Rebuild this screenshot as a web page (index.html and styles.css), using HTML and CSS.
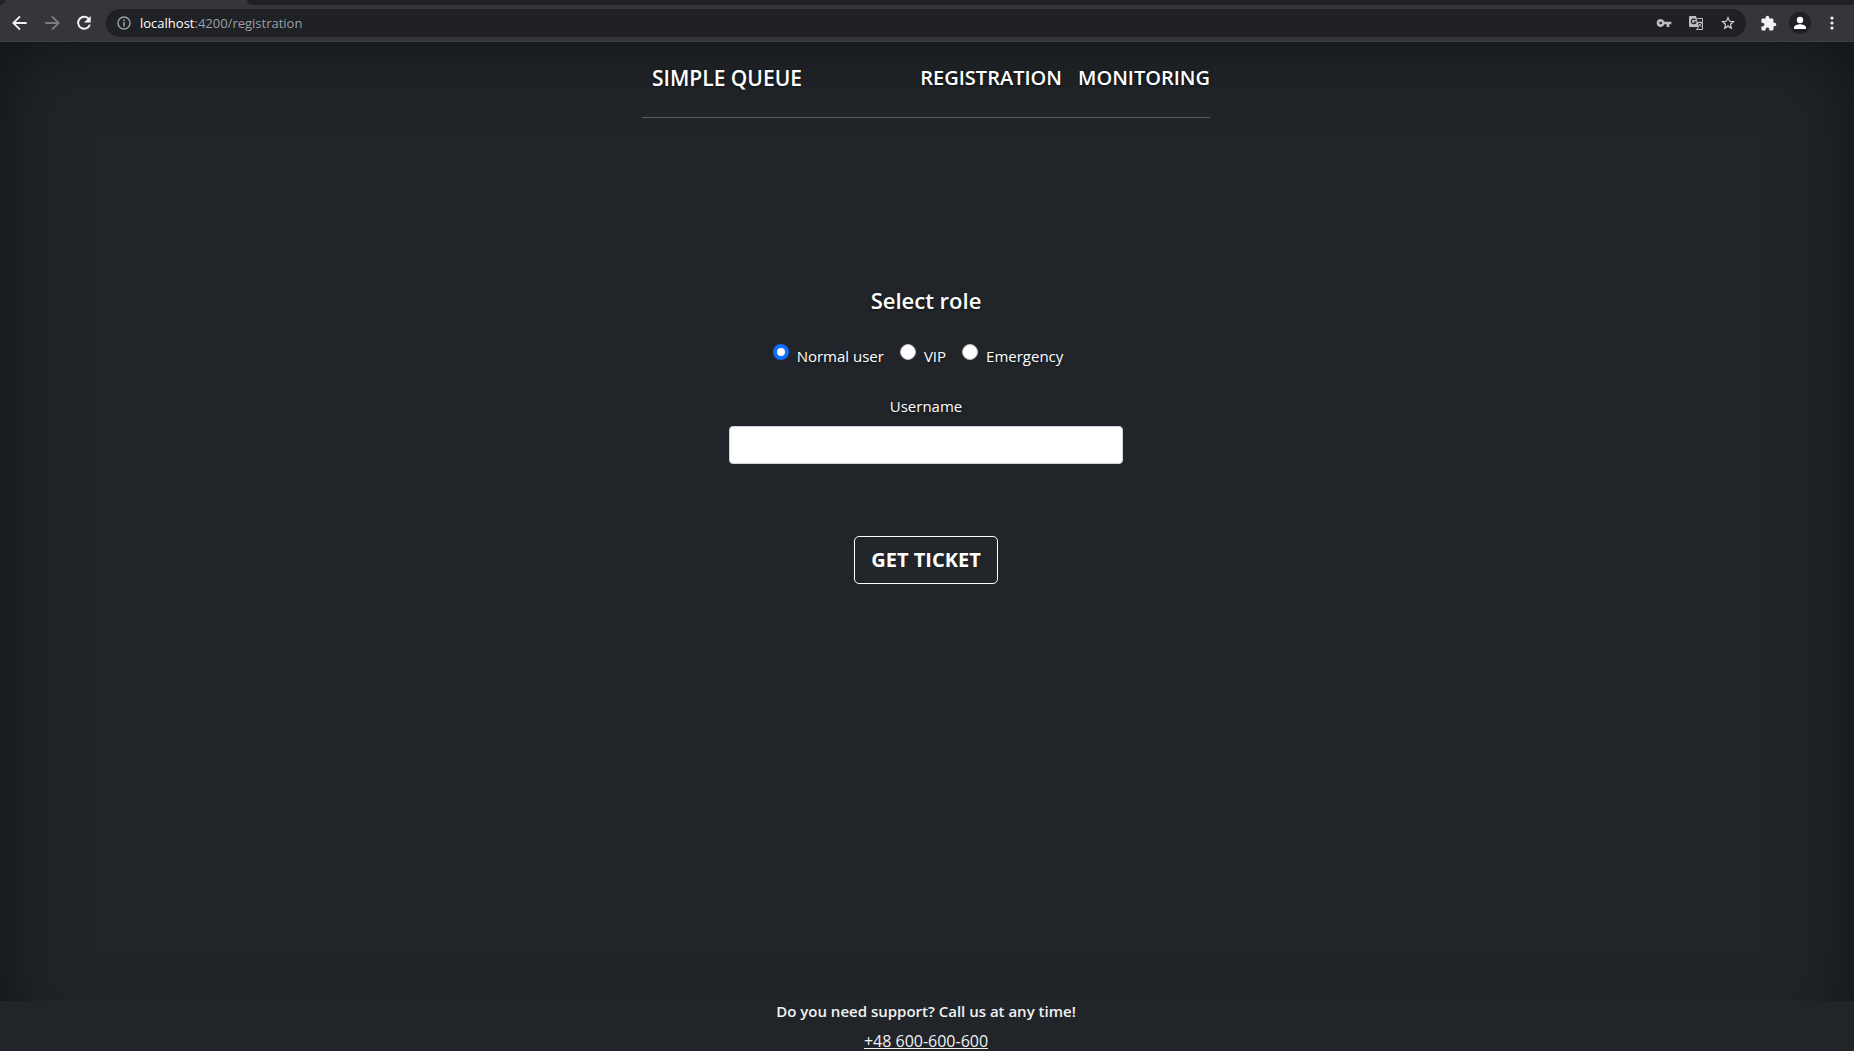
FILE: index.html
```html
<!DOCTYPE html>
<html lang="en">
<head>
<meta charset="utf-8">
<title>Simple Queue</title>
<link rel="stylesheet" href="styles.css">
</head>
<body>
<div class="browser">
  <div class="tab-strip"><div class="tab-edge"></div><div class="active-tab"></div><div class="tab-rest"></div></div>
  <div class="toolbar">
    <button class="tool" aria-label="Back"><svg width="20" height="20" viewBox="0 0 24 24"><path fill="none" stroke="#f1f3f4" stroke-width="2.200" d="M20 12H5M12 4l-8 8 8 8"/></svg></button>
    <button class="tool" aria-label="Forward"><svg width="20" height="20" viewBox="0 0 24 24"><path fill="none" stroke="#7c7d80" stroke-width="2.200" d="M4 12h15M12 4l8 8-8 8"/></svg></button>
    <button class="tool" aria-label="Reload"><svg width="20" height="20" viewBox="0 0 24 24"><path fill="none" stroke="#f1f3f4" stroke-width="2.300" d="M18 7.500a7.200 7.200 0 1 0 1 6.500"/><path fill="#f1f3f4" d="M20 3.500v8h-8z"/></svg></button>
    <div class="address">
      <svg width="16" height="16" viewBox="0 0 16 16"><circle cx="8" cy="8" r="6" fill="none" stroke="#9aa0a6" stroke-width="1.400"/><path stroke="#9aa0a6" stroke-width="1.600" d="M8 7v4.500M8 4.500v1.500"/></svg>
      <span class="url"><span class="host">localhost</span>:4200/registration</span>
      <div class="page-actions">
        <svg width="16" height="16" viewBox="0 0 24 24"><path fill="#bdbec0" d="M12.650 10A6 6 0 0 0 7 6a6 6 0 1 0 5.650 8H16v4h4v-4h3v-4H12.650zM7 14a2 2 0 1 1 0-4 2 2 0 0 1 0 4z"/></svg>
        <svg width="16" height="16" viewBox="0 0 16 16"><path fill="#bdbec0" d="M2 1h6l3 11H2a1 1 0 0 1-1-1V2a1 1 0 0 1 1-1z"/><path fill="none" stroke="#202124" stroke-width="1.200" d="M7.500 5a2.300 2.300 0 1 0 .4 2H5.800"/><path fill="none" stroke="#bdbec0" d="M9 3.500h5.500v11H8.500l2-2.500M9.500 7.500h5M12 6v1.500M13.500 7.500c-.5 2-1.500 3-3 4M10.500 8.500l3 3.500"/></svg>
        <svg width="16" height="16" viewBox="0 0 24 24"><path fill="#d0d1d3" d="M22.500 9.240l-7.690-.66L12 1.500 9.190 8.590 1.500 9.240l5.840 5.060-1.750 7.520L12 17.830l6.410 3.990-1.750-7.520zM12 15.400l-3.760 2.270 1-4.280-3.320-2.880 4.380-.38L12 6.100l1.710 4.040 4.380.38-3.320 2.880 1 4.280z"/></svg>
      </div>
    </div>
    <button class="tool" aria-label="Extensions"><svg width="17" height="17" viewBox="0 0 24 24"><path fill="#f1f3f4" d="M20.500 11H19V7a2 2 0 0 0-2-2h-4V3.500a2.500 2.500 0 0 0-5 0V5H4a2 2 0 0 0-2 2v3.800h1.500a2.700 2.700 0 0 1 0 5.400H2V20c0 1.100.9 2 2 2h3.800v-1.500a2.700 2.700 0 0 1 5.400 0V22H17a2 2 0 0 0 2-2v-4h1.500a2.500 2.500 0 0 0 0-5z"/></svg></button>
    <button class="tool" aria-label="Profile"><svg width="22" height="22" viewBox="0 0 22 22"><circle cx="11" cy="11" r="11" fill="#202124"/><circle cx="11" cy="8" r="3.200" fill="#fff"/><path fill="#fff" d="M5 17v-1.500c0-2.200 4-3.300 6-3.300s6 1.100 6 3.300V17z"/></svg></button>
    <button class="tool" aria-label="Menu"><svg width="16" height="16" viewBox="0 0 16 16" fill="#f1f3f4"><circle cx="8" cy="3" r="1.600"/><circle cx="8" cy="8" r="1.600"/><circle cx="8" cy="13" r="1.600"/></svg></button>
  </div>
</div>

<div class="page">
  <header class="masthead">
    <a class="brand" href="#">SIMPLE QUEUE</a>
    <nav class="nav">
      <a href="#">REGISTRATION</a>
      <a href="#">MONITORING</a>
    </nav>
  </header>
  <main>
    <form class="ticket-form">
      <fieldset class="roles">
        <legend>Select role</legend>
        <div class="role-list">
          <div class="role"><input type="radio" name="role" id="normal" checked><label for="normal">Normal user</label></div>
          <div class="role"><input type="radio" name="role" id="vip"><label for="vip">VIP</label></div>
          <div class="role"><input type="radio" name="role" id="emergency"><label for="emergency">Emergency</label></div>
        </div>
      </fieldset>
      <label class="name-label" for="username">Username</label>
      <input class="name-input" type="text" id="username">
      <button class="submit" type="button">GET TICKET</button>
    </form>
  </main>
</div>
<footer class="support">
  <p>Do you need support? Call us at any time!</p>
  <a href="tel:+48600600600">+48 600-600-600</a>
</footer>
</body>
</html>
```
FILE: styles.css
```css
* { box-sizing: border-box; }

body {
  margin: 0;
  min-height: 100vh;
  display: flex;
  flex-direction: column;
  background: #212529;
  color: #fff;
  font-family: "Segoe UI", "Open Sans", "Noto Sans", sans-serif;
  font-size: 15px;
  line-height: 24px;
}

a { color: inherit; text-decoration: none; }

/* Browser bar */
.browser { border-bottom: 1px solid #3f4043; }
.tab-strip { display: flex; height: 5px; background: #35363a; }
.tab-edge { width: 5px; background: #202124; border-bottom-right-radius: 5px; }
.active-tab { width: 242px; }
.tab-rest { flex: 1; background: #202124; border-bottom-left-radius: 5px; }
.toolbar {
  display: flex;
  align-items: center;
  height: 36px;
  padding: 0 6px 0 4px;
  background: #35363a;
}
.tool {
  display: grid;
  place-items: center;
  width: 32px;
  height: 32px;
  padding: 0;
  border: 0;
  background: none;
}
.address {
  display: flex;
  flex: 1;
  align-items: center;
  gap: 8px;
  height: 28px;
  margin: 0 6px;
  padding: 0 10px;
  border-radius: 14px;
  background: #202124;
}
.url { flex: 1; color: #9aa0a6; font-size: 13px; }
.host { color: #fff; }
.page-actions { display: flex; gap: 16px; }

/* Page */
.page {
  position: relative;
  z-index: 0;
  flex: 1;
  display: flex;
  flex-direction: column;
  align-items: center;
  text-shadow: 0 1px 3px rgba(0, 0, 0, .5);
}
/* Vignette that carries on underneath the footer */
.page::before {
  content: "";
  position: absolute;
  z-index: -1;
  inset: 0 0 -50px;
  box-shadow: inset 0 0 80px rgba(0, 0, 0, .5);
}
.masthead {
  display: flex;
  justify-content: space-between;
  align-items: center;
  width: 100%;
  max-width: 568px;
  height: 76px;
  margin-right: 2px;
  padding: 0 0 4px 10px;
  border-bottom: 1px solid #595c60;
  font-size: 20px;
  font-weight: 600;
}
.brand { font-size: 21px; }
.nav { display: flex; gap: 16px; }

.ticket-form {
  display: flex;
  flex-direction: column;
  align-items: center;
  width: 394px;
  max-width: 100%;
  margin: 164px 2px 0 0;
}
.roles { margin: 0; padding: 0; border: 0; }
.roles legend {
  margin: 0 auto;
  padding: 0;
  font-size: 22px;
  font-weight: 600;
  line-height: 36px;
}
.role-list { display: flex; gap: 16px; margin: 26px 16px 0 0; }
.role { display: flex; gap: 8px; }
.role input {
  appearance: none;
  width: 16px;
  height: 16px;
  margin: 0;
  border: 1px solid #bfbfbf;
  border-radius: 50%;
  background: #fff;
}
.role input:checked { border: 4px solid #0d6efd; }
.name-label { margin-top: 26px; }
.name-input {
  width: 100%;
  height: 38px;
  margin-top: 8px;
  padding: 6px 12px;
  border: 1px solid #ced4da;
  border-radius: 4px;
  background: #fff;
  font: inherit;
}
.submit {
  height: 48px;
  margin-top: 72px;
  padding: 0 16px;
  border: 1px solid #fff;
  border-radius: 5px;
  background: transparent;
  color: #fff;
  font: 700 20px/30px "Segoe UI", "Open Sans", "Noto Sans", sans-serif;
}

.support {
  position: relative;
  height: 50px;
  padding-right: 2px;
  background: #212529;
  color: #f2f2f2;
  text-align: center;
}
.support p { margin: 0 0 8px; line-height: 20px; font-weight: 600; }
.support a { font-size: 16px; text-decoration: underline; }
```
